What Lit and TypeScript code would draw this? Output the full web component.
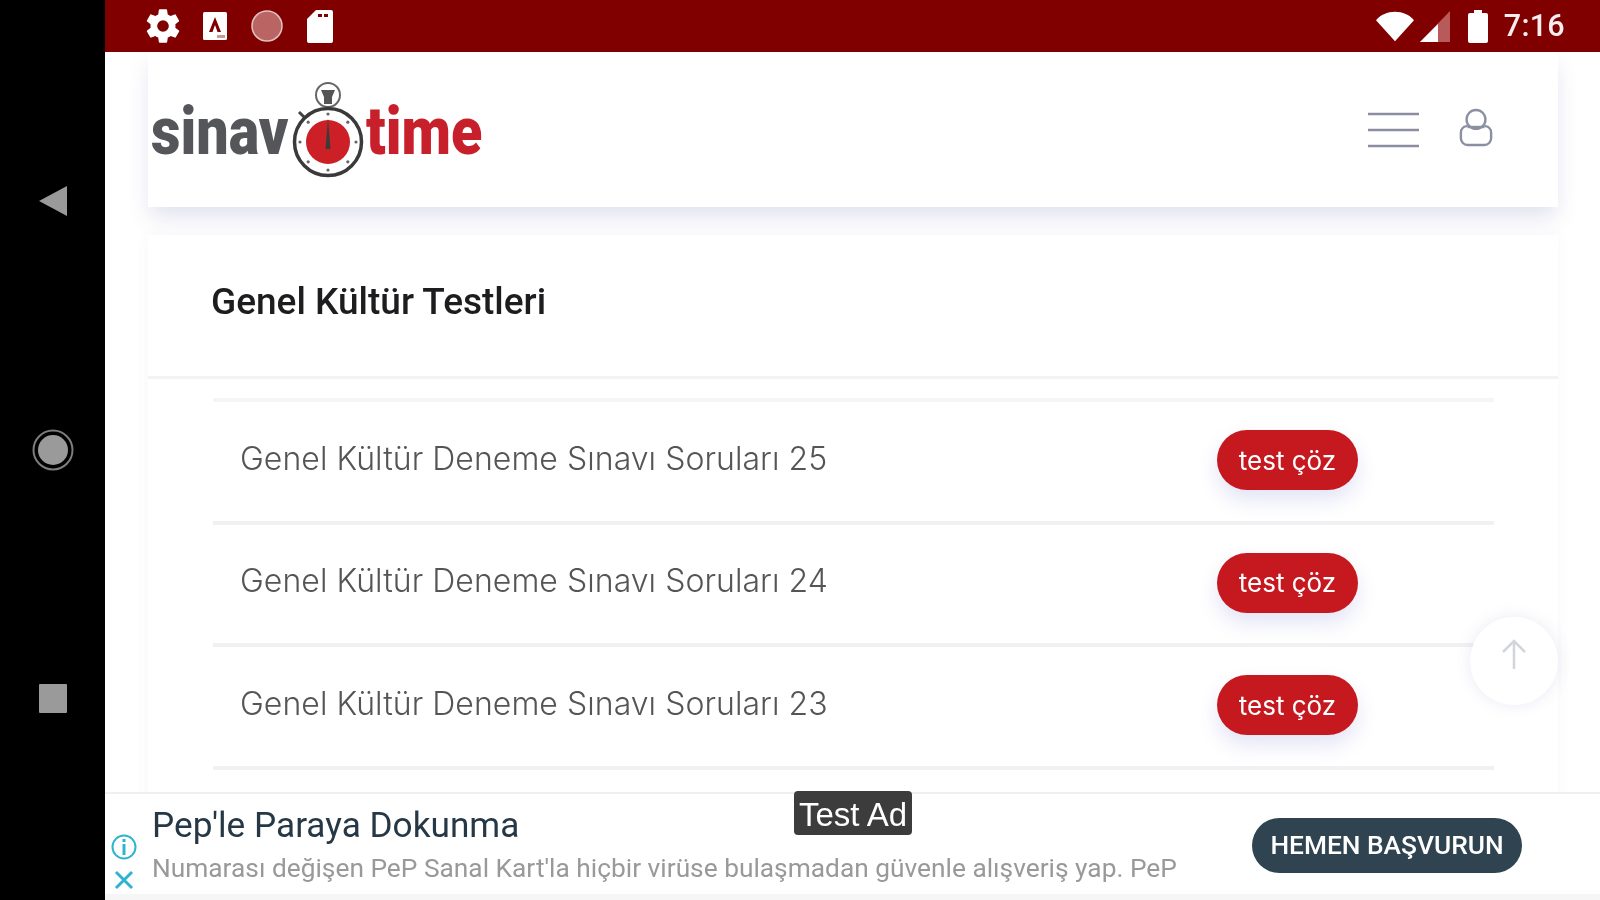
import { LitElement, html, css, svg } from "lit";
import { customElement } from "lit/decorators.js";

const ticks = [0, 45, 90, 135, 180, 225, 270, 315];

@customElement("app-root")
export class AppRoot extends LitElement {
  static styles = css`
    :host { display: flex; width: 1600px; height: 900px; overflow: hidden; background: #fff; font-family: Roboto, "Liberation Sans", sans-serif; filter: blur(0.6px); }
    svg { display: block; flex: none; }
    .nav { width: 105px; flex: none; background: #000; display: flex; flex-direction: column; align-items: center; padding-top: 186px; box-sizing: border-box; }
    .nav .home { margin-top: 213px; }
    .nav .recent { margin-top: 213px; }
    .main { flex: 1; min-width: 0; display: flex; flex-direction: column; position: relative; }
    .status { height: 52px; flex: none; background: #800000; display: flex; align-items: center; padding: 0 35px 0 38px; box-sizing: border-box; color: #fff; }
    .status .left { display: flex; align-items: center; gap: 24px; }
    .gear { margin-right: -4px; }
    .status .right { margin-left: auto; display: flex; align-items: center; }
    .clock { font-size: 30.5px; font-weight: 500; margin-left: 16px; line-height: 1; letter-spacing: 0.3px; color: #f6eeee; }
    .content { flex: 1; min-height: 0; overflow: hidden; padding: 0 42px 0 43px; }
    .topbar { height: 155px; box-sizing: border-box; background: #fff; box-shadow: 0 12px 20px -2px rgba(82, 85, 160, 0.17); display: flex; align-items: center; padding: 0 65px 0 3px; }
    .logo { display: flex; align-items: center; margin-top: -2px; }
    .word { display: block; font-size: 66px; font-weight: 900; line-height: 1; transform: scaleX(0.87); transform-origin: left center; white-space: nowrap; margin-top: 6px; }
    .word.a { color: #55565a; width: 141px; }
    .word.b { color: #c8202a; width: 118px; }
    .menu { margin-left: auto; display: flex; align-items: center; gap: 40px; margin-top: -6px; }
    .burger { margin-top: 6px; }
    .panel { margin-top: 28px; padding-bottom: 60px; background: #fff; box-shadow: 0 0 14px rgba(90, 90, 140, 0.05); }
    .panel-head { height: 144px; border-bottom: 3px solid #f3f3f5; box-sizing: border-box; display: flex; align-items: center; padding: 0 63px; }
    .panel-head h1 { margin: -9px 0 0; font-size: 37px; font-weight: 500; color: #1d1d20; line-height: 1; }
    .list { margin: 19px 64px 0 65px; border-top: 4px solid #f5f5f6; }
    .row { height: 122.5px; box-sizing: border-box; border-bottom: 4px solid #f1f1f3; display: flex; align-items: center; padding-left: 27px; }
    .row span { font-family: Inter, "Noto Sans", sans-serif; font-size: 32px; font-weight: 300; color: #555; letter-spacing: 0.05px; margin-top: -6px; }
    .btn { margin-left: auto; margin-right: 136px; margin-top: -2px; width: 141px; height: 60px; border-radius: 30px; background: #c6191f; color: #fff; display: flex; align-items: center; justify-content: center; font-family: Inter, sans-serif; font-size: 26px; box-shadow: 0 10px 20px rgba(80, 90, 200, 0.16); }
    .up { position: absolute; left: 1365px; top: 617px; width: 88px; height: 88px; border-radius: 50%; background: #fff; box-shadow: 0 0 16px rgba(90, 90, 170, 0.12); display: flex; justify-content: center; padding-top: 22px; box-sizing: border-box; }
    .ad { height: 108px; flex: none; background: #fff; border-top: 2px solid #f0f0f0; border-bottom: 6px solid #f6f6f6; box-sizing: border-box; display: flex; align-items: center; }
    .ad-side { width: 47px; flex: none; display: flex; flex-direction: column; align-items: center; gap: 10px; padding-top: 36px; padding-right: 10px; box-sizing: border-box; }
    .ad-text { flex: 1; min-width: 0; }
    .ad-title { font-size: 35.2px; color: #263845; line-height: 40px; white-space: nowrap; }
    .ad-desc { font-size: 26.3px; color: #999; line-height: 32px; margin-top: 7px; white-space: nowrap; }
    .cta { flex: none; margin-right: 78px; width: 270px; height: 55px; border-radius: 28px; background: #2f4450; color: #fff; font-size: 26.3px; font-weight: 500; display: flex; align-items: center; justify-content: center; margin-top: 2px; }
    .badge { position: absolute; left: 689px; top: 791px; width: 118px; height: 44px; padding-top: 3px; box-sizing: border-box; background: #3c3c3c; border-radius: 4px; color: #fff; font-size: 33px; display: flex; align-items: center; justify-content: center; font-family: "Liberation Sans", sans-serif; }
  `;

  gear() {
    return html`<svg class="gear" width="40" height="40" viewBox="0 0 24 24" fill="#fff"><path d="M19.4 13c.04-.32.1-.66.1-1s-.06-.68-.1-1l2.1-1.65c.2-.15.25-.42.13-.64l-2-3.46c-.13-.22-.4-.3-.62-.22l-2.49 1c-.52-.4-1.08-.73-1.69-.98l-.38-2.65A.49.49 0 0 0 14 2h-4c-.25 0-.46.18-.49.42l-.38 2.65c-.61.25-1.17.59-1.69.98l-2.49-1c-.23-.09-.49 0-.62.22l-2 3.46c-.13.22-.07.49.12.64L4.57 11c-.04.32-.07.66-.07 1s.03.68.07 1l-2.11 1.65c-.19.15-.25.42-.12.64l2 3.46c.13.22.39.3.62.22l2.49-1c.52.4 1.08.73 1.69.98l.38 2.65c.03.24.24.42.49.42h4c.25 0 .46-.18.49-.42l.38-2.65c.61-.25 1.17-.59 1.69-.98l2.49 1c.23.09.49 0 .62-.22l2-3.46c.12-.22.07-.49-.13-.64L19.4 13zM12 15.5a3.500 3.500 0 1 1 0-7 3.500 3.500 0 0 1 0 7z"/></svg>`;
  }

  stopwatch() {
    const marks = ticks.map((a) => {
      const r = (a * Math.PI) / 180;
      const x = 36 + Math.sin(r) * 28;
      const y = 62 - Math.cos(r) * 28;
      return svg`<circle cx=${x} cy=${y} r="1.6" fill="#666"/>`;
    });
    return html`<svg width="74" height="98" viewBox="0 0 74 98">
      <circle cx="36" cy="15" r="12" fill="none" stroke="#666" stroke-width="2"/>
      <path d="M29 10h14l-3 7v7h-8v-7z" fill="#555"/>
      <path d="M7 32l5 5" stroke="#444" stroke-width="3"/>
      <circle cx="36" cy="62" r="33.500" fill="#fff" stroke="#3a3a3a" stroke-width="3.500"/>
      <circle cx="36" cy="62" r="22" fill="#cc2026"/>
      ${marks}
      <path d="M36 38l2.500 31h-5z" fill="#3a3a3a"/>
    </svg>`;
  }

  render() {
    const rows = [25, 24, 23];
    return html`
      <div class="nav">
        <svg width="28" height="30" viewBox="0 0 28 30"><path d="M28 0v30L0 15z" fill="#9a9a9a"/></svg>
        <svg class="home" width="42" height="42" viewBox="0 0 42 42"><circle cx="21" cy="21" r="19.500" fill="none" stroke="#7d7d7d" stroke-width="2"/><circle cx="21" cy="21" r="15" fill="#9a9a9a"/></svg>
        <svg class="recent" width="28" height="29" viewBox="0 0 28 29"><rect width="28" height="29" rx="1" fill="#9a9a9a"/></svg>
      </div>
      <div class="main">
        <div class="status">
          <div class="left">
            ${this.gear()}
            <svg width="24" height="28" viewBox="0 0 24 28"><rect width="24" height="28" rx="1.500" fill="#fff"/><path d="M12 5l6 15h-3.500l-2.500-7-2.500 7H6z" fill="#800000"/><rect x="14" y="23" width="8" height="3" fill="#c99"/></svg>
            <svg width="32" height="32" viewBox="0 0 32 32"><circle cx="16" cy="16" r="15" fill="#bb6464" stroke="#e2c2c2" stroke-width="1.500"/></svg>
            <svg width="26" height="33" viewBox="0 0 26 33"><path d="M9 0h15a2 2 0 0 1 2 2v29a2 2 0 0 1-2 2H2a2 2 0 0 1-2-2V9z" fill="#fff"/><rect x="11" y="4" width="4" height="3" fill="#800000"/><rect x="17" y="4" width="4" height="3" fill="#800000"/></svg>
          </div>
          <div class="right">
            <svg width="38" height="31" viewBox="0 0 40 31"><path d="M0 9C5 3 12 0 20 0s15 3 20 9L20 31z" fill="#fff"/></svg>
            <svg style="margin-left:6px" width="31" height="31" viewBox="0 0 31 31"><path d="M30 0v31H0z" fill="#b95a5a"/><path d="M18 13v18H0z" fill="#fff"/></svg>
            <svg style="margin-left:17px" width="20" height="33" viewBox="0 0 20 33"><path d="M6 0h8v3h4a2 2 0 0 1 2 2v26a2 2 0 0 1-2 2H2a2 2 0 0 1-2-2V5a2 2 0 0 1 2-2h4z" fill="#fff"/></svg>
            <span class="clock">7:16</span>
          </div>
        </div>
        <div class="content">
          <div class="topbar">
            <div class="logo">
              <span class="word a">sinav</span>
              ${this.stopwatch()}
              <span class="word b">time</span>
            </div>
            <div class="menu">
              <svg class="burger" width="51" height="36" viewBox="0 0 51 36"><path d="M0 2h51M0 18h51M0 34h51" stroke="#8b8da0" stroke-width="2.500"/></svg>
              <svg width="34" height="40" viewBox="0 0 36 40" fill="none" stroke="#8b8fa2" stroke-width="2.500"><circle cx="18" cy="12" r="10"/><path d="M9 19H8a7 7 0 0 0-6 7v6a7 7 0 0 0 7 7h18a7 7 0 0 0 7-7v-6a7 7 0 0 0-6-7h-1"/><path d="M9 20h18"/></svg>
            </div>
          </div>
          <div class="panel">
            <div class="panel-head"><h1>Genel Kültür Testleri</h1></div>
            <div class="list">
              ${rows.map((n) => html`<div class="row"><span>Genel Kültür Deneme Sınavı Soruları ${n}</span><div class="btn">test çöz</div></div>`)}
            </div>
          </div>
        </div>
        <div class="up"><svg width="26" height="30" viewBox="0 0 26 30" fill="none" stroke="#d3d4dc" stroke-width="2.500"><path d="M13 30V2M2 13L13 2l11 11"/></svg></div>
        <div class="ad">
          <div class="ad-side">
            <svg width="26" height="26" viewBox="0 0 26 26" fill="none" stroke="#2fb4d0" stroke-width="2"><circle cx="13" cy="13" r="11.500"/><path d="M13 10v11" stroke-width="3"/><path d="M13 5v3" stroke-width="3"/></svg>
            <svg width="20" height="20" viewBox="0 0 20 20" fill="none" stroke="#2fb4d0" stroke-width="3"><path d="M2 2l16 16M18 2L2 18"/></svg>
          </div>
          <div class="ad-text">
            <div class="ad-title">Pep'le Paraya Dokunma</div>
            <div class="ad-desc">Numarası değişen PeP Sanal Kart'la hiçbir virüse bulaşmadan güvenle alışveriş yap. PeP</div>
          </div>
          <div class="cta">HEMEN BAŞVURUN</div>
        </div>
        <div class="badge">Test Ad</div>
      </div>
    `;
  }
}
